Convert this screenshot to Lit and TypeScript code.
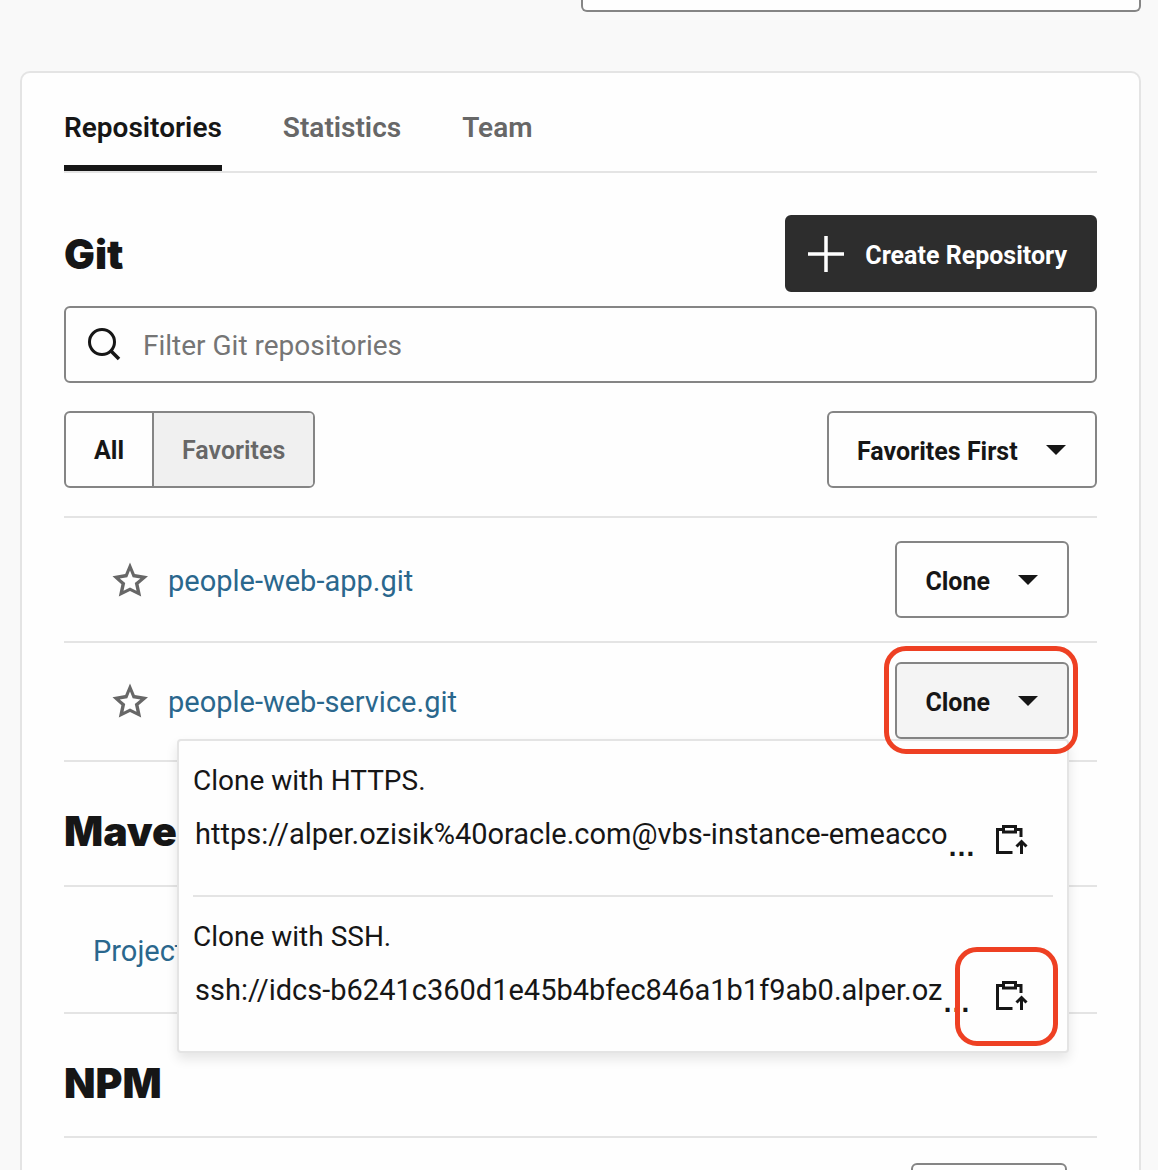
import { LitElement, html, css, svg, nothing } from 'lit';
import { customElement, state } from 'lit/decorators.js';
import { classMap } from 'lit/directives/class-map.js';

interface Repo {
  name: string;
  open: boolean;
}

interface CloneUrl {
  title: string;
  url: string;
  marked: boolean;
}

const caret = svg`<svg class="caret" viewBox="0 0 22 12" width="22" height="12" aria-hidden="true"><path d="M1 1h20L11 11z" fill="currentColor"/></svg>`;

const star = svg`<svg viewBox="0 0 36 36" width="36" height="36" aria-hidden="true"><path fill-rule="evenodd" fill="currentColor" d="M18 0.5 L22.8 12 L36 14.2 L26.6 22.2 L29.2 34.6 L18 29 L6.8 34.6 L9.4 22.2 L0.5 14.2 L13.2 12 Z M18 8.6 L15.3 15.2 L7.8 16.6 L13.2 21 L11.5 28.8 L18 25.6 L24.5 28.8 L22.8 21 L28.4 16.6 L20.7 15.2 Z"/></svg>`;

const copyIcon = svg`<svg viewBox="0 0 32 32" width="32" height="32" aria-hidden="true"><g fill="none" stroke="currentColor" stroke-width="3"><path d="M7 4.5H1.5V27.5H16.5"/><path d="M20 4.5h5V12"/><path d="M7.5 1.5h12v5.500h-12z"/><path d="M25.500 29V16"/><path d="M20.500 21.500l5-5 5 5"/></g></svg>`;

@customElement('app-root')
export class AppRoot extends LitElement {
  @state() private repos: Repo[] = [
    { name: 'people-web-app.git', open: false },
    { name: 'people-web-service.git', open: true },
  ];

  private tabs = ['Repositories', 'Statistics', 'Team'];

  private urls: CloneUrl[] = [
    { title: 'Clone with HTTPS.', url: 'https://alper.ozisik%40oracle.com@vbs-instance-emeacco', marked: false },
    { title: 'Clone with SSH.', url: 'ssh://idcs-b6241c360d1e45b4bfec846a1b1f9ab0.alper.oz', marked: true },
  ];

  static styles = css`
    :host {
      display: block;
      height: 100vh;
      overflow: hidden;
      background: #f9f9f9;
      color: #161616;
      font-family: Roboto, 'Noto Sans', sans-serif;
      font-size: 28px;
      line-height: 36px;
    }
    * { box-sizing: border-box; }
    svg { display: block; flex: none; }
    button, input, select {
      font: inherit;
      color: inherit;
      margin: 0;
    }
    button { cursor: pointer; }
    .page { padding: 0 17px 0 20px; }
    .top {
      display: flex;
      justify-content: flex-end;
      padding-bottom: 59px;
    }
    .top-field {
      width: 50%;
      height: 12px;
      border: 2px solid #858585;
      border-top: 0;
      border-radius: 0 0 6px 6px;
      background: #fefefe;
      padding: 0 28px;
      outline: none;
    }
    .card {
      border: 2px solid #e4e4e4;
      border-radius: 10px;
      background: #fefefe;
      padding: 0 42px 42px;
    }
    .tabs {
      display: flex;
      gap: 61px;
      border-bottom: 2px solid #e4e4e4;
    }
    .tab {
      border: 0;
      border-bottom: 6px solid transparent;
      background: none;
      padding: 37px 0 19px;
      font-weight: 600;
      color: #676767;
    }
    .tab.current {
      color: #161616;
      border-bottom-color: #161616;
    }
    h2 {
      margin: 0;
      font: 900 41px/42px Inter, 'Noto Sans', sans-serif;
    }
    .head {
      display: flex;
      align-items: center;
      justify-content: space-between;
      padding: 42px 0 14px;
    }
    .btn {
      display: inline-flex;
      align-items: center;
      height: 77px;
      border: 2px solid #858585;
      border-radius: 6px;
      background: #fefefe;
      padding: 0 28px;
      gap: 27px;
      font-size: 25px;
      font-weight: 700;
      white-space: nowrap;
    }
    .btn > span { padding-top: 5px; }
    .btn.primary {
      background: #2d2d2d;
      border-color: #2d2d2d;
      color: #fff;
      gap: 21px;
      padding-left: 21px;
    }
    .btn.active { background: #f4f4f4; }
    .btn.wide { width: 156px; }
    .search {
      display: flex;
      align-items: center;
      gap: 22px;
      height: 77px;
      border: 2px solid #858585;
      border-radius: 6px;
      padding: 0 21px;
    }
    .search input {
      flex: 1;
      min-width: 0;
      border: 0;
      outline: none;
      background: none;
      padding: 2px 0 0;
    }
    .search input::placeholder { color: #757575; opacity: 1; }
    .bar {
      display: flex;
      justify-content: space-between;
      padding: 28px 0;
      border-bottom: 2px solid #e4e4e4;
    }
    .toggle {
      display: flex;
      height: 77px;
      border: 2px solid #858585;
      border-radius: 6px;
      overflow: hidden;
      font-size: 25px;
    }
    .toggle button {
      border: 0;
      background: none;
      padding: 2px 28px 0;
      font-weight: 700;
    }
    .toggle button + button {
      border-left: 2px solid #858585;
      background: #f0f0f0;
      color: #676767;
      font-weight: 600;
    }
    .sort { position: relative; }
    .sort select {
      appearance: none;
      padding: 5px 77px 0 28px;
    }
    .sort .caret {
      position: absolute;
      right: 30px;
      top: 33px;
      pointer-events: none;
    }
    .row {
      display: flex;
      align-items: center;
      min-height: 125px;
      padding: 23px 28px 23px 48px;
      border-bottom: 2px solid #e4e4e4;
    }
    .row.open {
      min-height: 119px;
      padding-top: 19px;
      padding-bottom: 21px;
    }
    .row.plain { min-height: 127px; padding-left: 29px; }
    .row.last { border-bottom: 0; padding-top: 25px; justify-content: flex-end; padding-right: 30px; }
    .fav {
      border: 0;
      background: none;
      padding: 0;
      margin-right: 20px;
      color: #676767;
    }
    a {
      padding-top: 2px;
      font-size: 29px;
      color: #2a678d;
      text-decoration: none;
    }
    .clone {
      position: relative;
      margin-left: auto;
    }
    .clone .btn { display: flex; }
    .section-head {
      padding: 48px 0 33px;
      border-bottom: 2px solid #e4e4e4;
    }
    .section-head.short { padding-bottom: 32px; }
    .menu {
      position: absolute;
      z-index: 1;
      top: 100%;
      right: 0;
      width: 892px;
      border: 2px solid #e4e4e4;
      border-radius: 4px;
      background: #fefefe;
      padding: 0 14px;
      box-shadow: 0 6px 12px rgba(0, 0, 0, 0.1);
    }
    .entry { padding: 22px 0 27px; }
    .entry + .entry { border-top: 2px solid #e4e4e4; }
    .url-row {
      display: flex;
      height: 55px;
      margin-top: 14px;
      padding: 0 12px 0 2px;
      font-size: 29px;
      line-height: 42px;
      white-space: nowrap;
    }
    .dots {
      align-self: flex-end;
      font-family: 'Liberation Sans', sans-serif;
      font-size: 28px;
      font-weight: 700;
    }
    .copy {
      position: relative;
      display: flex;
      align-items: center;
      justify-content: center;
      width: 58px;
      margin-left: auto;
      border: 0;
      background: none;
      padding: 0;
    }
    .ring {
      position: absolute;
      z-index: 2;
      border: 5px solid #ee4023;
      border-radius: 22px;
      pointer-events: none;
    }
    .clone > .ring { inset: -16px -9px -15px -11px; }
    .copy .ring { inset: -22px -17px -22px -28px; }
  `;

  private toggle(index: number) {
    this.repos = this.repos.map((r, i) => ({ ...r, open: i === index ? !r.open : false }));
  }

  private renderMenu() {
    return html`
      <div class="menu">
        ${this.urls.map(
          (u) => html`
            <div class="entry">
              <div>${u.title}</div>
              <div class="url-row">
                <span>${u.url}</span><span class="dots">…</span>
                <button class="copy" type="button" aria-label="Copy to clipboard">
                  ${copyIcon}${u.marked ? html`<span class="ring"></span>` : nothing}
                </button>
              </div>
            </div>
          `,
        )}
      </div>
      <span class="ring"></span>
    `;
  }

  render() {
    return html`
      <div class="page">
        <div class="top"><input class="top-field" type="text" aria-label="Search" /></div>
        <main class="card">
          <div class="tabs" role="tablist">
            ${this.tabs.map(
              (t, i) => html`<button class=${classMap({ tab: true, current: i === 0 })} type="button" role="tab" aria-selected=${i === 0}>${t}</button>`,
            )}
          </div>

          <div class="head">
            <h2>Git</h2>
            <button class="btn primary" type="button">
              <svg viewBox="0 0 36 36" width="36" height="36" aria-hidden="true"><path d="M18 0v36M0 18h36" stroke="currentColor" stroke-width="3.500" /></svg>
              <span>Create Repository</span>
            </button>
          </div>

          <label class="search">
            <svg viewBox="0 1 34 34" width="34" height="34" aria-hidden="true"><g fill="none" stroke="currentColor" stroke-width="3"><circle cx="15" cy="15" r="12.5" /><path d="M23.500 23.500L32 32" stroke-width="3.500" /></g></svg>
            <input type="text" placeholder="Filter Git repositories" aria-label="Filter Git repositories" />
          </label>

          <div class="bar">
            <div class="toggle" role="group" aria-label="Show">
              <button type="button" aria-pressed="true">All</button><button type="button" aria-pressed="false">Favorites</button>
            </div>
            <div class="sort">
              <select class="btn" aria-label="Sort order"><option>Favorites First</option></select>
              ${caret}
            </div>
          </div>

          ${this.repos.map(
            (r, i) => html`
              <div class=${classMap({ row: true, open: r.open })}>
                <button class="fav" type="button" aria-label="Mark as favorite">${star}</button>
                <a href="#">${r.name}</a>
                <div class="clone">
                  <button class=${classMap({ btn: true, active: r.open })} type="button" aria-expanded=${r.open} @click=${() => this.toggle(i)}>
                    <span>Clone</span>${caret}
                  </button>
                  ${r.open ? this.renderMenu() : nothing}
                </div>
              </div>
            `,
          )}

          <div class="section-head"><h2>Maven</h2></div>
          <div class="row plain"><a href="#">Project</a></div>

          <div class="section-head short"><h2>NPM</h2></div>
          <div class="row last"><button class="btn wide" type="button" aria-label="Add"></button></div>
        </main>
      </div>
    `;
  }
}
